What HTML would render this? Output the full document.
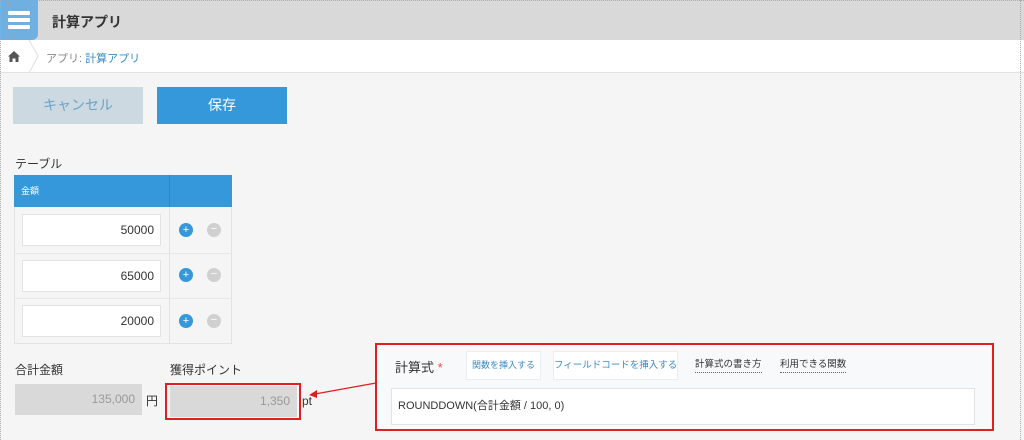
<!DOCTYPE html>
<html><head><meta charset="utf-8"><style>
*{box-sizing:border-box;margin:0;padding:0}
body{width:1024px;height:440px;overflow:hidden;background:#f5f5f5;font-family:"Liberation Sans","Noto Sans CJK JP",sans-serif;position:relative;color:#333}
.a{position:absolute;white-space:nowrap}
</style></head><body>
<div class="a" style="left:0;top:0;width:1024px;height:40px;background:#d9d9d9;border-top:1px dotted #aaa"></div>
<div class="a" style="left:0;top:0;width:38px;height:40px;background:#6fb0e0;border-radius:0 0 6px 0"></div>
<div class="a" style="left:8px;top:11px;width:22px;height:4px;background:#fff;border-radius:1px"></div>
<div class="a" style="left:8px;top:18px;width:22px;height:4px;background:#fff;border-radius:1px"></div>
<div class="a" style="left:8px;top:25px;width:22px;height:4px;background:#fff;border-radius:1px"></div>
<div class="a" style="left:52px;top:12px;font-size:14px;font-weight:bold;color:#333">計算アプリ</div>
<div class="a" style="left:0;top:40px;width:1024px;height:33px;background:#fff;border-bottom:1px solid #e3e3e3"></div>
<svg class="a" style="left:8px;top:51px" width="12" height="11"><path d="M6 0 L12 5.5 L10.5 5.5 L10.5 11 L7.5 11 L7.5 7.5 L4.5 7.5 L4.5 11 L1.5 11 L1.5 5.5 L0 5.5 Z" fill="#555"/></svg>
<svg class="a" style="left:28px;top:40px" width="12" height="33"><path d="M1 0 L10 16 L1 33" stroke="#e0e0e0" fill="none"/></svg>
<div class="a" style="left:46px;top:50px;font-size:11px;color:#888">アプリ: <span style="color:#3b8ac4">計算アプリ</span></div>
<div class="a" style="left:0;top:0;width:1px;height:440px;border-left:1px dotted #aaa"></div>
<div class="a" style="left:1020px;top:0;width:1px;height:440px;border-left:1px dotted #aaa"></div>
<div class="a" style="left:13px;top:87px;width:130px;height:37px;background:#ccd9e0;color:#6aa3cc;font-size:14px;text-align:center;line-height:37px">キャンセル</div>
<div class="a" style="left:157px;top:87px;width:130px;height:37px;background:#3498db;color:#fff;font-size:14px;text-align:center;line-height:37px">保存</div>
<div class="a" style="left:15px;top:155px;font-size:12px;color:#333">テーブル</div>
<div class="a" style="left:14px;top:175px;width:218px;height:32px;background:#3498db"></div>
<div class="a" style="left:169px;top:175px;width:1px;height:32px;background:#2d88c6"></div>
<div class="a" style="left:21px;top:184px;font-size:9px;color:#fff">金額</div>
<div class="a" style="left:14px;top:207px;width:218px;height:137px;border:1px solid #e3e3e3;border-top:none"></div>
<div class="a" style="left:169px;top:207px;width:1px;height:137px;background:#e3e3e3"></div>
<div class="a" style="left:14px;top:253px;width:218px;height:1px;background:#e8e8e8"></div>
<div class="a" style="left:14px;top:298px;width:218px;height:1px;background:#e8e8e8"></div>
<div class="a" style="left:22px;top:214px;width:139px;height:32px;background:#fff;border:1px solid #e3e3e3;text-align:right;padding-right:6px;line-height:30px;font-size:12px">50000</div>
<div class="a" style="left:22px;top:260px;width:139px;height:32px;background:#fff;border:1px solid #e3e3e3;text-align:right;padding-right:6px;line-height:30px;font-size:12px">65000</div>
<div class="a" style="left:22px;top:305px;width:139px;height:32px;background:#fff;border:1px solid #e3e3e3;text-align:right;padding-right:6px;line-height:30px;font-size:12px">20000</div>
<div class="a" style="left:179px;top:223px;width:14px;height:14px;border-radius:50%;background:#3498db;color:#fff;font-size:11px;line-height:14px;text-align:center">+</div>
<div class="a" style="left:207px;top:223px;width:14px;height:14px;border-radius:50%;background:#d0d0d0;color:#fff;font-size:11px;line-height:13px;text-align:center">−</div>
<div class="a" style="left:179px;top:268px;width:14px;height:14px;border-radius:50%;background:#3498db;color:#fff;font-size:11px;line-height:14px;text-align:center">+</div>
<div class="a" style="left:207px;top:268px;width:14px;height:14px;border-radius:50%;background:#d0d0d0;color:#fff;font-size:11px;line-height:13px;text-align:center">−</div>
<div class="a" style="left:179px;top:314px;width:14px;height:14px;border-radius:50%;background:#3498db;color:#fff;font-size:11px;line-height:14px;text-align:center">+</div>
<div class="a" style="left:207px;top:314px;width:14px;height:14px;border-radius:50%;background:#d0d0d0;color:#fff;font-size:11px;line-height:13px;text-align:center">−</div>
<div class="a" style="left:15px;top:361px;font-size:12px">合計金額</div>
<div class="a" style="left:170px;top:361px;font-size:12px">獲得ポイント</div>
<div class="a" style="left:15px;top:384px;width:127px;height:31px;background:#d9d9d9;color:#999;font-size:12px;text-align:right;padding-right:7px;line-height:31px">135,000</div>
<div class="a" style="left:146px;top:392px;font-size:12px">円</div>
<div class="a" style="left:165px;top:383px;width:136px;height:37px;border:2px solid #e02020"></div>
<div class="a" style="left:170px;top:386px;width:127px;height:31px;background:#d9d9d9;color:#999;font-size:12px;text-align:right;padding-right:7px;line-height:31px">1,350</div>
<div class="a" style="left:302px;top:394px;font-size:12px">pt</div>
<svg class="a" style="left:305px;top:380px" width="72" height="20"><path d="M71 3 L10 14" stroke="#e02020" stroke-width="1.3"/><path d="M4 15 L12 10 L12 18 Z" fill="#e02020"/></svg>
<div class="a" style="left:375px;top:343px;width:619px;height:88px;border:2px solid #e02020;background:#f7f9fa"></div>
<div class="a" style="left:395px;top:357px;font-size:13px">計算式 <span style="color:#e74c3c">*</span></div>
<div class="a" style="left:466px;top:351px;width:75px;height:29px;background:#fff;border:1px solid #e8eef2;color:#3b8ac4;font-size:9px;text-align:center;line-height:27px">関数を挿入する</div>
<div class="a" style="left:553px;top:351px;width:125px;height:29px;background:#fff;border:1px solid #e8eef2;color:#3b8ac4;font-size:9.5px;text-align:center;line-height:27px">フィールドコードを挿入する</div>
<div class="a" style="left:695px;top:358px;font-size:9.5px;border-bottom:1px dotted #666;line-height:14px">計算式の書き方</div>
<div class="a" style="left:780px;top:358px;font-size:9.5px;border-bottom:1px dotted #666;line-height:14px">利用できる関数</div>
<div class="a" style="left:391px;top:388px;width:584px;height:37px;background:#fff;border:1px solid #e3e3e3;font-size:11px;padding-left:6px;line-height:35px">ROUNDDOWN(合計金額 / 100, 0)</div>
</body></html>
